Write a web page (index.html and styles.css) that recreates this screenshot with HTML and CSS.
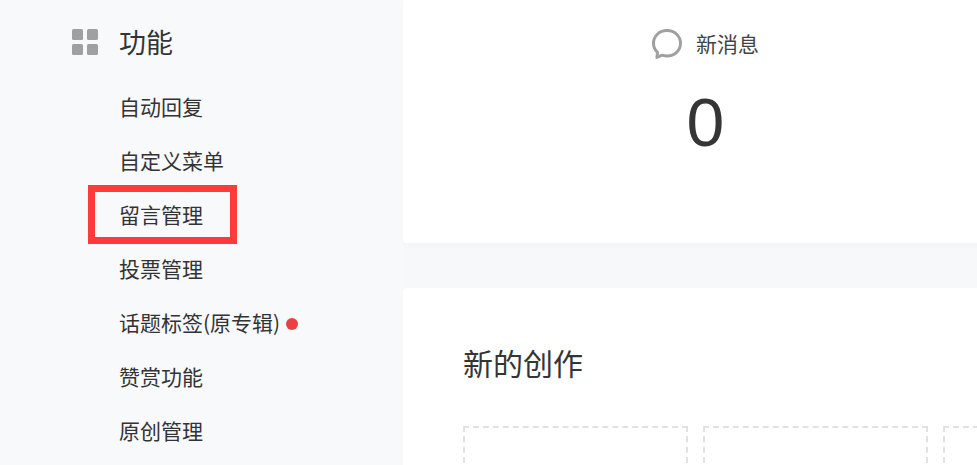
FILE: index.html
```html
<!DOCTYPE html>
<html lang="zh-CN">
<head>
<meta charset="utf-8">
<title>功能</title>
<link rel="stylesheet" href="styles.css">
</head>
<body>
<div class="page">
  <aside class="sidebar">
    <div class="group-head">
      <svg class="grid-icon" width="27" height="27" viewBox="0 0 27 27" aria-hidden="true">
        <rect x="0" y="0" width="11" height="11" rx="1.5"/>
        <rect x="15" y="0" width="11" height="11" rx="1.5"/>
        <rect x="0" y="15" width="11" height="11" rx="1.5"/>
        <rect x="15" y="15" width="11" height="11" rx="1.5"/>
      </svg>
      <span class="group-title">功能</span>
    </div>
    <ul class="menu">
      <li class="menu-item">自动回复</li>
      <li class="menu-item">自定义菜单</li>
      <li class="menu-item">留言管理<span class="highlight"></span></li>
      <li class="menu-item">投票管理</li>
      <li class="menu-item">话题标签(原专辑)<span class="dot"></span></li>
      <li class="menu-item">赞赏功能</li>
      <li class="menu-item">原创管理</li>
    </ul>
  </aside>
  <main class="content">
    <section class="card stats">
      <div class="stat-label">
        <svg class="chat-icon" width="31" height="31" viewBox="1 1 31 31" aria-hidden="true">
          <path d="M16 2.5C8.3 2.5 2.5 8.2 2.5 15.300c0 3.600 1.500 6.800 4 9.100l-.6 5 5.300-2.200c1.500.5 3.100.8 4.800.8 7.700 0 13.500-5.600 13.500-12.700S23.700 2.500 16 2.500z"/>
        </svg>
        <span class="stat-text">新消息</span>
      </div>
      <div class="stat-value">0</div>
    </section>
    <section class="card create">
      <h2 class="create-title">新的创作</h2>
      <div class="slots">
        <div class="slot"></div>
        <div class="slot"></div>
        <div class="slot"></div>
      </div>
    </section>
  </main>
</div>
</body>
</html>
```

FILE: styles.css
```css
* {
  box-sizing: border-box;
}

html,
body {
  margin: 0;
  height: 100%;
  overflow: hidden;
}

body {
  background: #f7f8fa;
  color: #333;
  font-family: "Noto Sans CJK SC", "Liberation Sans", sans-serif;
}

.page {
  display: flex;
  height: 465px;
  overflow: hidden;
}

.sidebar {
  width: 403px;
  flex: none;
  background: #f8f9fb;
  padding: 15px 0 0 72px;
}

.group-head {
  display: flex;
  align-items: center;
  height: 54px;
}

.grid-icon {
  flex: none;
  fill: #a0a0a0;
}

.group-title {
  margin-left: 20px;
  font-size: 27px;
  line-height: 54px;
  color: #333;
}

.menu {
  list-style: none;
  margin: 10px 0 0;
  padding: 0 0 0 47px;
}

.menu-item {
  position: relative;
  display: flex;
  align-items: center;
  height: 54px;
  font-size: 21px;
  color: #333;
  white-space: nowrap;
}

.highlight {
  position: absolute;
  left: -31px;
  top: -2px;
  width: 149px;
  height: 59px;
  border: 7px solid #fe3b3b;
}

.dot {
  width: 12px;
  height: 12px;
  margin-left: 6px;
  margin-top: 3px;
  border-radius: 50%;
  background: #e94141;
}

.content {
  flex: 1;
  min-width: 0;
  display: flex;
  flex-direction: column;
  gap: 45px;
}

.card {
  flex: none;
  background: #fff;
  box-shadow: 0 2px 6px rgba(0, 0, 0, 0.02);
}

.stats {
  height: 243px;
  width: 605px;
  border-radius: 0 0 4px 4px;
  padding-top: 28px;
  text-align: center;
}

.stat-label {
  display: flex;
  align-items: center;
  justify-content: center;
  gap: 13px;
  height: 32px;
  font-size: 21px;
  color: #444;
}

.stat-text {
  position: relative;
  top: -1px;
}

.chat-icon {
  flex: none;
  fill: none;
  stroke: #a0a0a0;
  stroke-width: 3;
  stroke-linejoin: round;
}

.stat-value {
  margin-top: 17px;
  font-family: "Liberation Sans", sans-serif;
  font-size: 68px;
  line-height: 90px;
  color: #353535;
}

.create {
  height: 300px;
  width: 605px;
  border-radius: 4px 4px 0 0;
  padding: 53px 0 0 60px;
}

.create-title {
  margin: 0;
  font-size: 30px;
  font-weight: 400;
  line-height: 42px;
  color: #353535;
}

.slots {
  display: flex;
  gap: 15px;
  margin-top: 43px;
}

.slot {
  flex: none;
  width: 225px;
  height: 120px;
  border: 2px dashed #dfe1e3;
}
```
